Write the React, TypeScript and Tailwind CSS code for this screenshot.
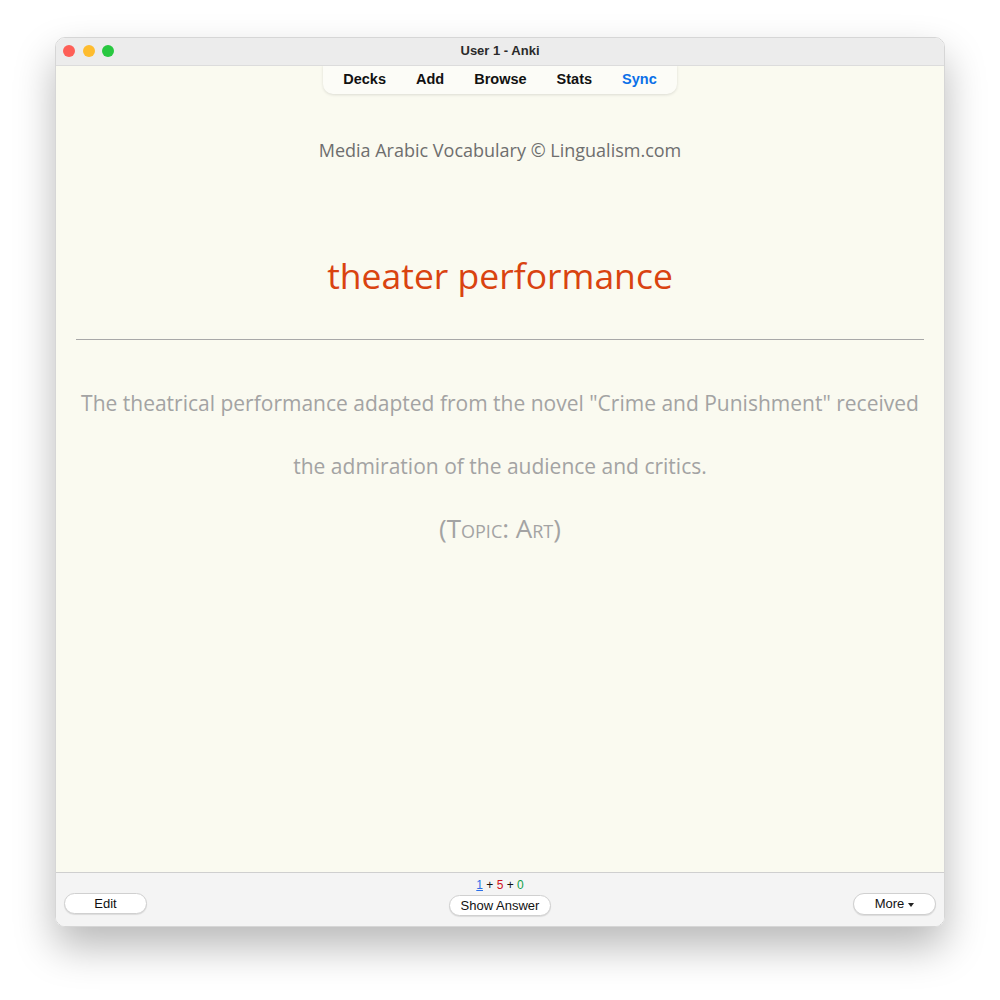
const cardFont = { fontFamily: '"Open Sans", Lato, sans-serif' };

export default function App() {
  return (
    <div className="w-[1000px] h-[1000px] bg-white pt-[37px] pl-[55px]">
      <div
        className="w-[890px] h-[890px] flex flex-col rounded-[10px] overflow-hidden border border-[#d6d6d6] shadow-[0_20px_40px_rgba(0,0,0,0.28)]"
        style={{ fontFamily: '"Liberation Sans", Arial, sans-serif' }}
      >
        {/* title bar */}
        <div className="h-[28px] shrink-0 bg-[#ececec] border-b border-[#dcdcdc] flex items-center relative">
          <div className="flex gap-[7.5px] pl-[7px] -mt-[1px]">
            <span className="w-[12px] h-[12px] rounded-full bg-[#fe5f57]" />
            <span className="w-[12px] h-[12px] rounded-full bg-[#febc2e]" />
            <span className="w-[12px] h-[12px] rounded-full bg-[#28c840]" />
          </div>
          <div className="absolute inset-0 flex items-center justify-center text-[13px] font-bold text-[#2a2a2a] -mt-[1px]">
            User 1 - Anki
          </div>
        </div>

        {/* card area */}
        <div className="flex-1 bg-[#fafaf0] flex flex-col items-center">
          <div className="flex gap-[30px] px-[20px] h-[29px] items-center rounded-b-[10px] bg-[#fcfcf7] shadow-[0_1px_3px_rgba(0,0,0,0.12)] text-[14.5px] font-bold text-[#111] -mt-[1px]">
            <span>Decks</span>
            <span>Add</span>
            <span>Browse</span>
            <span>Stats</span>
            <span className="text-[#0a70e8]">Sync</span>
          </div>

          <div className="w-full px-[20px] text-center" style={cardFont}>
            <div className="mt-[43px] text-[18px] text-[#6e6e6e]">
              Media Arabic Vocabulary © Lingualism.com
            </div>
            <div className="mt-[89px] text-[35.5px] leading-[44px] text-[#d94310]">
              theater performance
            </div>
            <hr className="mt-[42px] border-0 border-t border-[#a8a8a8]" />
            <div className="mt-[32px] text-[21px] leading-[63px] text-[#a3a3a3]">
              The theatrical performance adapted from the novel "Crime and
              Punishment" received the admiration of the audience and critics.
            </div>
            <div className="-mt-[1px] text-[26px] leading-[63px] text-[#a3a3a3] [font-variant:small-caps]">
              (Topic: Art)
            </div>
          </div>
        </div>

        {/* bottom bar */}
        <div className="h-[54px] shrink-0 bg-[#f4f4f4] border-t border-[#cfcfcf] flex items-start px-[8px] text-[13px] text-[#111]">
          <div className="w-[300px] pt-[20px]">
            <button className="w-[83px] h-[21px] rounded-full bg-white border border-[#d0d0d0] shadow-[0_1px_1px_rgba(0,0,0,0.1)] leading-[19px]">
              Edit
            </button>
          </div>
          <div className="flex-1 flex flex-col items-center pt-[5px]">
            <div className="text-[12px] leading-[14px]">
              <span className="text-[#2a6ee8] underline">1</span>
              <span> + </span>
              <span className="text-[#d0101c]">5</span>
              <span> + </span>
              <span className="text-[#12a04a]">0</span>
            </div>
            <button className="mt-[3px] w-[102px] h-[21px] rounded-full bg-white border border-[#d0d0d0] shadow-[0_1px_1px_rgba(0,0,0,0.1)] leading-[19px]">
              Show Answer
            </button>
          </div>
          <div className="w-[300px] pt-[20px] flex justify-end">
            <button className="w-[83px] h-[22px] rounded-full bg-white border border-[#d0d0d0] shadow-[0_1px_1px_rgba(0,0,0,0.1)] leading-[20px] flex items-center justify-center gap-[4px]">
              More
              <span className="w-0 h-0 border-l-[3.5px] border-r-[3.5px] border-t-[4px] border-l-transparent border-r-transparent border-t-[#222] mt-[1px]" />
            </button>
          </div>
        </div>
      </div>
    </div>
  );
}
